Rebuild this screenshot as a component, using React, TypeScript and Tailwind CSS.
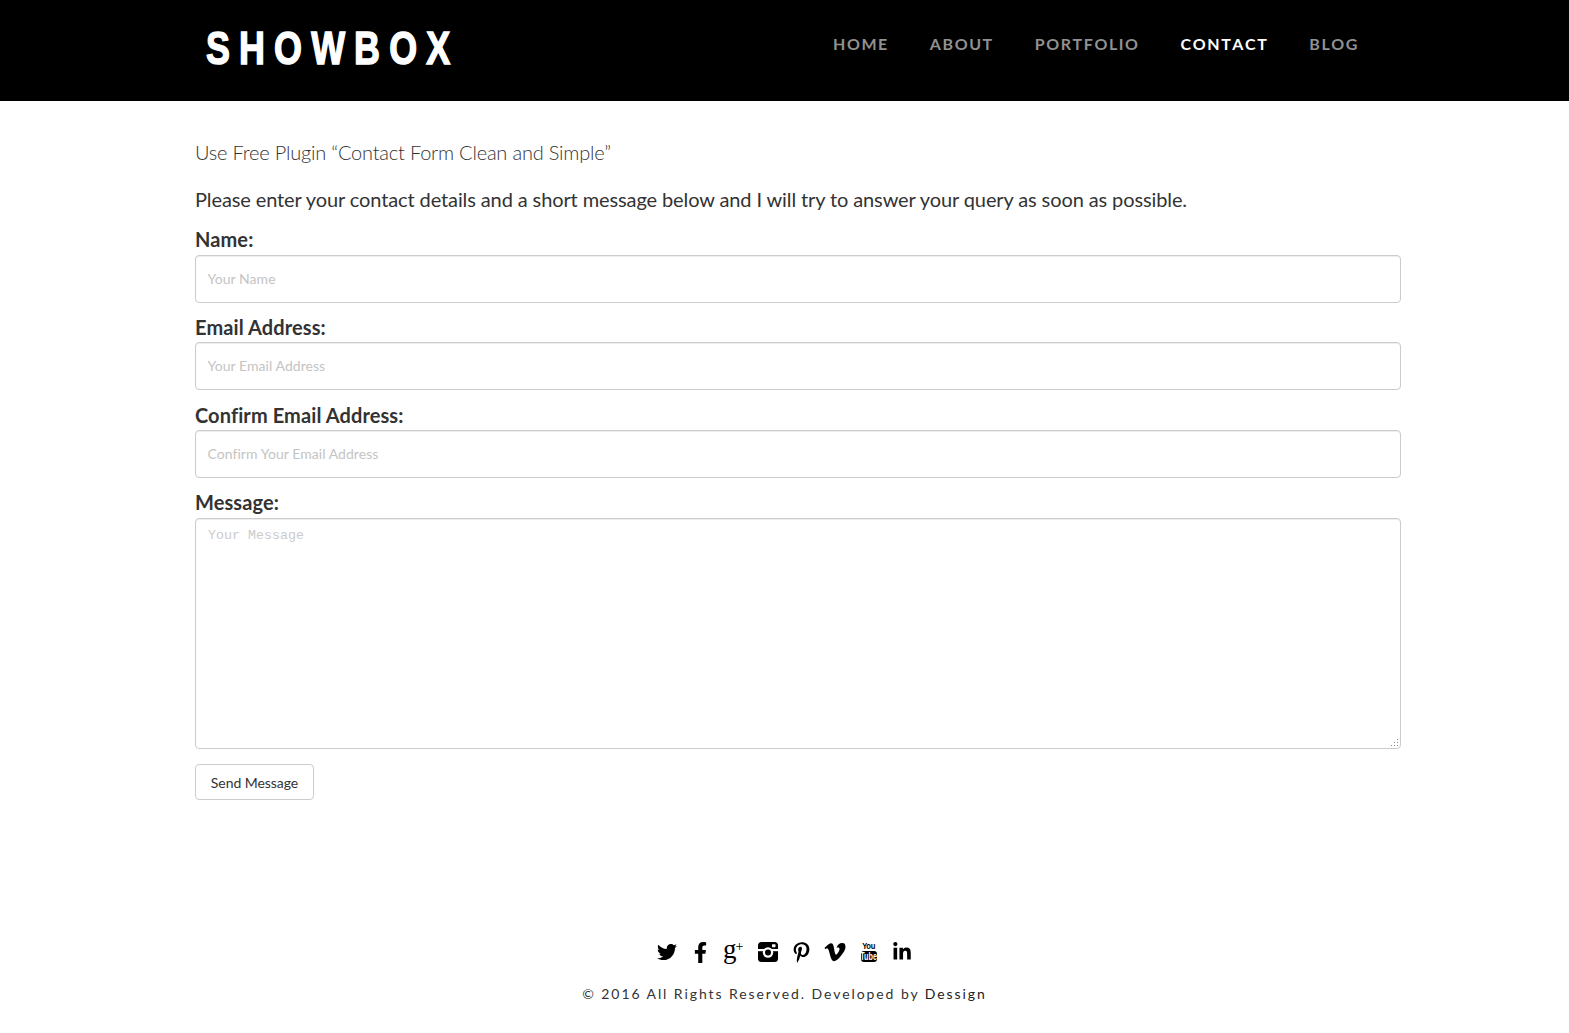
import { FaTwitter, FaFacebookF, FaPinterestP, FaVimeoV, FaLinkedinIn } from "react-icons/fa";

const NAV = ["HOME", "ABOUT", "PORTFOLIO", "CONTACT", "BLOG"];

const FIELDS = [
  { label: "Name:", placeholder: "Your Name", gap: "mb-[9px]", top: "pt-0" },
  { label: "Email Address:", placeholder: "Your Email Address", gap: "mb-[10px]", top: "pt-[1px]" },
  { label: "Confirm Email Address:", placeholder: "Confirm Your Email Address", gap: "mb-[10px]", top: "pt-[1px]" },
];

function InstagramIcon() {
  return (
    <svg width="20" height="20" viewBox="0 0 20 20">
      <rect width="20" height="20" rx="3.500" fill="#000" />
      <rect x="0" y="7" width="20" height="2.200" fill="#fff" />
      <circle cx="10" cy="10.500" r="5.200" fill="#fff" />
      <circle cx="10" cy="10.500" r="3" fill="#000" />
      <rect x="14" y="2.200" width="3.500" height="3" rx="0.600" fill="#fff" />
    </svg>
  );
}

function GooglePlusIcon() {
  return (
    <span className="flex h-[24px] w-[22px] items-start font-['Liberation_Serif',serif] text-black">
      <span className="text-[27px] leading-[18px]">g</span>
      <span className="-ml-[1px] text-[14px] leading-[14px]">+</span>
    </span>
  );
}

function YoutubeIcon() {
  return (
    <span className="flex w-[16px] flex-col items-center font-['Liberation_Sans',sans-serif] font-bold leading-none text-black">
      <span className="h-[8px] origin-center scale-x-[0.85] text-[9px] leading-[8px] tracking-[-0.4px]">You</span>
      <span className="mt-[1px] flex h-[11px] w-[16px] items-center justify-center rounded-[3px] bg-black text-white">
        <span className="origin-center scale-x-[0.72] text-[10px] leading-none">Tube</span>
      </span>
    </span>
  );
}

export default function App() {
  return (
    <div className="min-h-[1033px] bg-white font-['Lato',sans-serif] text-[#333]">
      <header className="flex h-[101px] items-start bg-black">
        <div className="ml-[206px] flex w-[1153px] items-start justify-between">
          <a className="mt-[22px] inline-block origin-left scale-x-[0.78] font-['Liberation_Sans',sans-serif] text-[46px] leading-[53px] font-bold tracking-[11.700px] whitespace-nowrap text-white [-webkit-text-stroke:1.500px_white]">
            SHOWBOX
          </a>
          <nav className="mt-[33px] flex gap-[41px]">
            {NAV.map((item) => (
              <a
                key={item}
                className={`text-[16px] leading-[22px] font-bold tracking-[1.570px] [font-kerning:none] ${item === "CONTACT" ? "text-white" : "text-[#919191]"}`}
              >
                {item}
              </a>
            ))}
          </nav>
        </div>
      </header>

      <main className="ml-[195px] w-[1205px]">
        <h1 className="mt-[37px] text-[20px] leading-[28px] font-light tracking-[-0.2px]">
          Use Free Plugin “Contact Form Clean and Simple”
        </h1>
        <p className="mt-[19px] text-[20px] leading-[28px] tracking-[-0.110px]">
          Please enter your contact details and a short message below and I will try to answer your query as soon as possible.
        </p>

        <form className="mt-[12px]">
          {FIELDS.map((f) => (
            <div key={f.label} className={f.gap}>
              <label className={`block h-[30px] text-[20px] leading-[28px] font-bold tracking-[0.100px] ${f.top}`}>{f.label}</label>
              <input
                placeholder={f.placeholder}
                className="block h-[48px] w-[1206px] rounded-[4px] border border-[#ccc] pr-[12px] pb-[2px] pl-[11.500px] text-[14px] tracking-[0.050px] shadow-[inset_0_1px_1px_rgba(0,0,0,0.075)] placeholder:text-[#c4c4c4]"
              />
            </div>
          ))}
          <label className="block h-[30px] text-[20px] leading-[28px] font-bold tracking-[0.100px]">Message:</label>
          <div className="relative w-[1206px]">
            <textarea
              placeholder="Your Message"
              className="block h-[231px] w-full resize-none rounded-[4px] border border-[#ccc] px-[12px] py-[8px] font-['Liberation_Mono',monospace] text-[13.330px] leading-[18px] shadow-[inset_0_1px_1px_rgba(0,0,0,0.075)] placeholder:text-[#cbcbcb]"
            />
            {/* resize grip */}
            <svg className="absolute right-[2px] bottom-[2px]" width="9" height="9" viewBox="0 0 9 9" fill="#8a8a8a">
              <rect x="7" y="1" width="1" height="1" />
              <rect x="4" y="4" width="1" height="1" />
              <rect x="7" y="4" width="1" height="1" />
              <rect x="1" y="7" width="1" height="1" />
              <rect x="4" y="7" width="1" height="1" />
              <rect x="7" y="7" width="1" height="1" />
            </svg>
          </div>
          <button
            type="button"
            className="mt-[15px] block h-[36px] w-[119px] rounded-[4px] border border-[#ccc] bg-white pt-[1px] text-center text-[14px] tracking-[-0.050px] text-[#333]"
          >
            Send Message
          </button>
        </form>
      </main>

      <footer className="mt-[140px] flex flex-col items-center text-black">
        <div className="grid h-[24px] w-[269px] grid-cols-8 items-center justify-items-center text-[20px]">
          <FaTwitter />
          <FaFacebookF className="text-[21px]" />
          <GooglePlusIcon />
          <InstagramIcon />
          <FaPinterestP className="text-[21px]" />
          <FaVimeoV className="text-[24px]" />
          <YoutubeIcon />
          <FaLinkedinIn />
        </div>
        <p className="mt-[20px] text-[14px] leading-[20px] tracking-[1.920px] text-[#333]">
          © 2016 All Rights Reserved. Developed by <span className="text-[#222]">Dessign</span>
        </p>
      </footer>
    </div>
  );
}
